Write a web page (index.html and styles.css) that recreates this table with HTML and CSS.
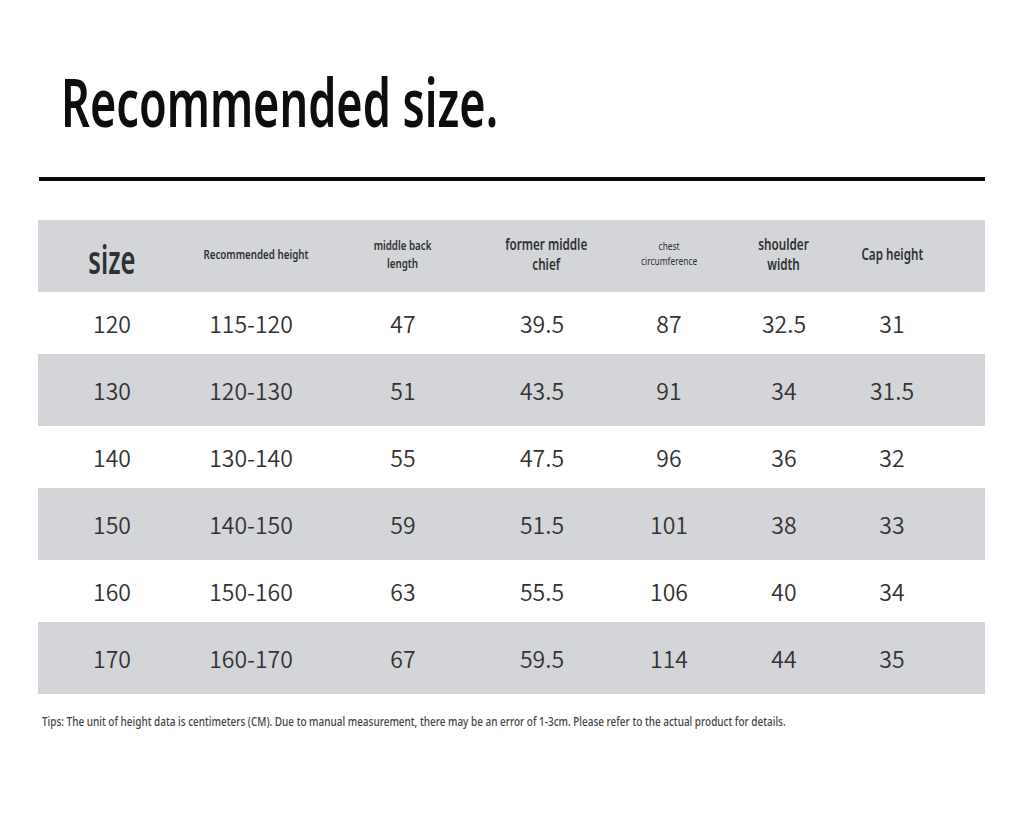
FILE: index.html
```html
<!DOCTYPE html>
<html lang="en">
<head>
<meta charset="utf-8">
<title>Recommended size</title>
<link rel="stylesheet" href="styles.css">
</head>
<body>
<div class="page">
  <h1 class="title"><span class="title-text">Recommended size.</span></h1>
  <div class="rule"></div>
  <div class="table">
    <div class="row head">
      <div class="cell h-size"><span class="sq">size</span></div>
      <div class="cell h-sm"><span class="sq">Recommended height</span></div>
      <div class="cell h-sm"><span class="sq">middle back<br>length</span></div>
      <div class="cell h-md"><span class="sq">former middle<br>chief</span></div>
      <div class="cell h-xs"><span class="sq">chest<br>circumference</span></div>
      <div class="cell h-md"><span class="sq">shoulder<br>width</span></div>
      <div class="cell h-md"><span class="sq">Cap height</span></div>
      <div class="cell"></div>
    </div>
    <div class="row light">
      <div class="cell">120</div><div class="cell">115-120</div><div class="cell">47</div><div class="cell">39.5</div><div class="cell">87</div><div class="cell">32.5</div><div class="cell">31</div><div class="cell"></div>
    </div>
    <div class="row dark">
      <div class="cell">130</div><div class="cell">120-130</div><div class="cell">51</div><div class="cell">43.5</div><div class="cell">91</div><div class="cell">34</div><div class="cell">31.5</div><div class="cell"></div>
    </div>
    <div class="row light">
      <div class="cell">140</div><div class="cell">130-140</div><div class="cell">55</div><div class="cell">47.5</div><div class="cell">96</div><div class="cell">36</div><div class="cell">32</div><div class="cell"></div>
    </div>
    <div class="row dark">
      <div class="cell">150</div><div class="cell">140-150</div><div class="cell">59</div><div class="cell">51.5</div><div class="cell">101</div><div class="cell">38</div><div class="cell">33</div><div class="cell"></div>
    </div>
    <div class="row light">
      <div class="cell">160</div><div class="cell">150-160</div><div class="cell">63</div><div class="cell">55.5</div><div class="cell">106</div><div class="cell">40</div><div class="cell">34</div><div class="cell"></div>
    </div>
    <div class="row dark">
      <div class="cell">170</div><div class="cell">160-170</div><div class="cell">67</div><div class="cell">59.5</div><div class="cell">114</div><div class="cell">44</div><div class="cell">35</div><div class="cell"></div>
    </div>
  </div>
  <p class="tips"><span class="tips-text">Tips: The unit of height data is centimeters (CM). Due to manual measurement, there may be an error of 1-3cm. Please refer to the actual product for details.</span></p>
</div>
</body>
</html>
```
FILE: styles.css
```css
* { box-sizing: border-box; }
html, body { margin: 0; padding: 0; background: #fff; }
body { width: 1024px; height: 819px; overflow: hidden; }
.page { padding: 0 39px 0 38px; }
.title {
  margin: 0;
  padding: 61px 0 0 23px;
  height: 177px;
  font-family: "Noto Sans", sans-serif;
  font-weight: 600;
  font-size: 67px;
  line-height: 80px;
  color: #0d0d0d;
  white-space: nowrap;
}
.title-text {
  display: inline-block;
  transform: scaleX(0.672);
  transform-origin: left center;
}
.rule { height: 4px; background: #0a0a0a; margin-left: 1px; }
.table { margin-top: 39px; }
.row {
  display: grid;
  grid-template-columns: 148px 130px 174px 104px 150px 80px 136px 1fr;
  align-items: center;
  height: 62px;
}
.row.head, .row.dark { background: #d3d5d8; height: 72px; }
.cell {
  text-align: center;
  font-family: "Noto Sans CJK SC", "Noto Sans", sans-serif;
  font-weight: 350;
  font-size: 23px;
  color: #333;
}
.head .cell {
  font-family: "Noto Sans", sans-serif;
  color: #2f3133;
  font-weight: 600;
  white-space: nowrap;
  padding-bottom: 4px;
}
.sq {
  display: inline-block;
  transform: scaleX(0.75);
  transform-origin: center center;
}
.h-size { font-size: 40px !important; line-height: 44px; padding: 6px 0 0 !important; }
.h-size .sq { transform: scaleX(0.64); }
.h-sm { font-size: 13px !important; line-height: 18px; }
.h-md { font-size: 16px !important; line-height: 20px; }
.h-md .sq { transform: scaleX(0.73); }
.h-xs { font-size: 10.5px !important; line-height: 15px; font-weight: 400 !important; }
.h-xs .sq { transform: scaleX(0.8); }
.tips {
  margin: 19px 0 0 4px;
  font-family: "Noto Sans", sans-serif;
  font-weight: 500;
  font-size: 12px;
  color: #444;
  white-space: nowrap;
}
.tips-text {
  display: inline-block;
  transform: scaleX(0.83);
  transform-origin: left center;
}
```
